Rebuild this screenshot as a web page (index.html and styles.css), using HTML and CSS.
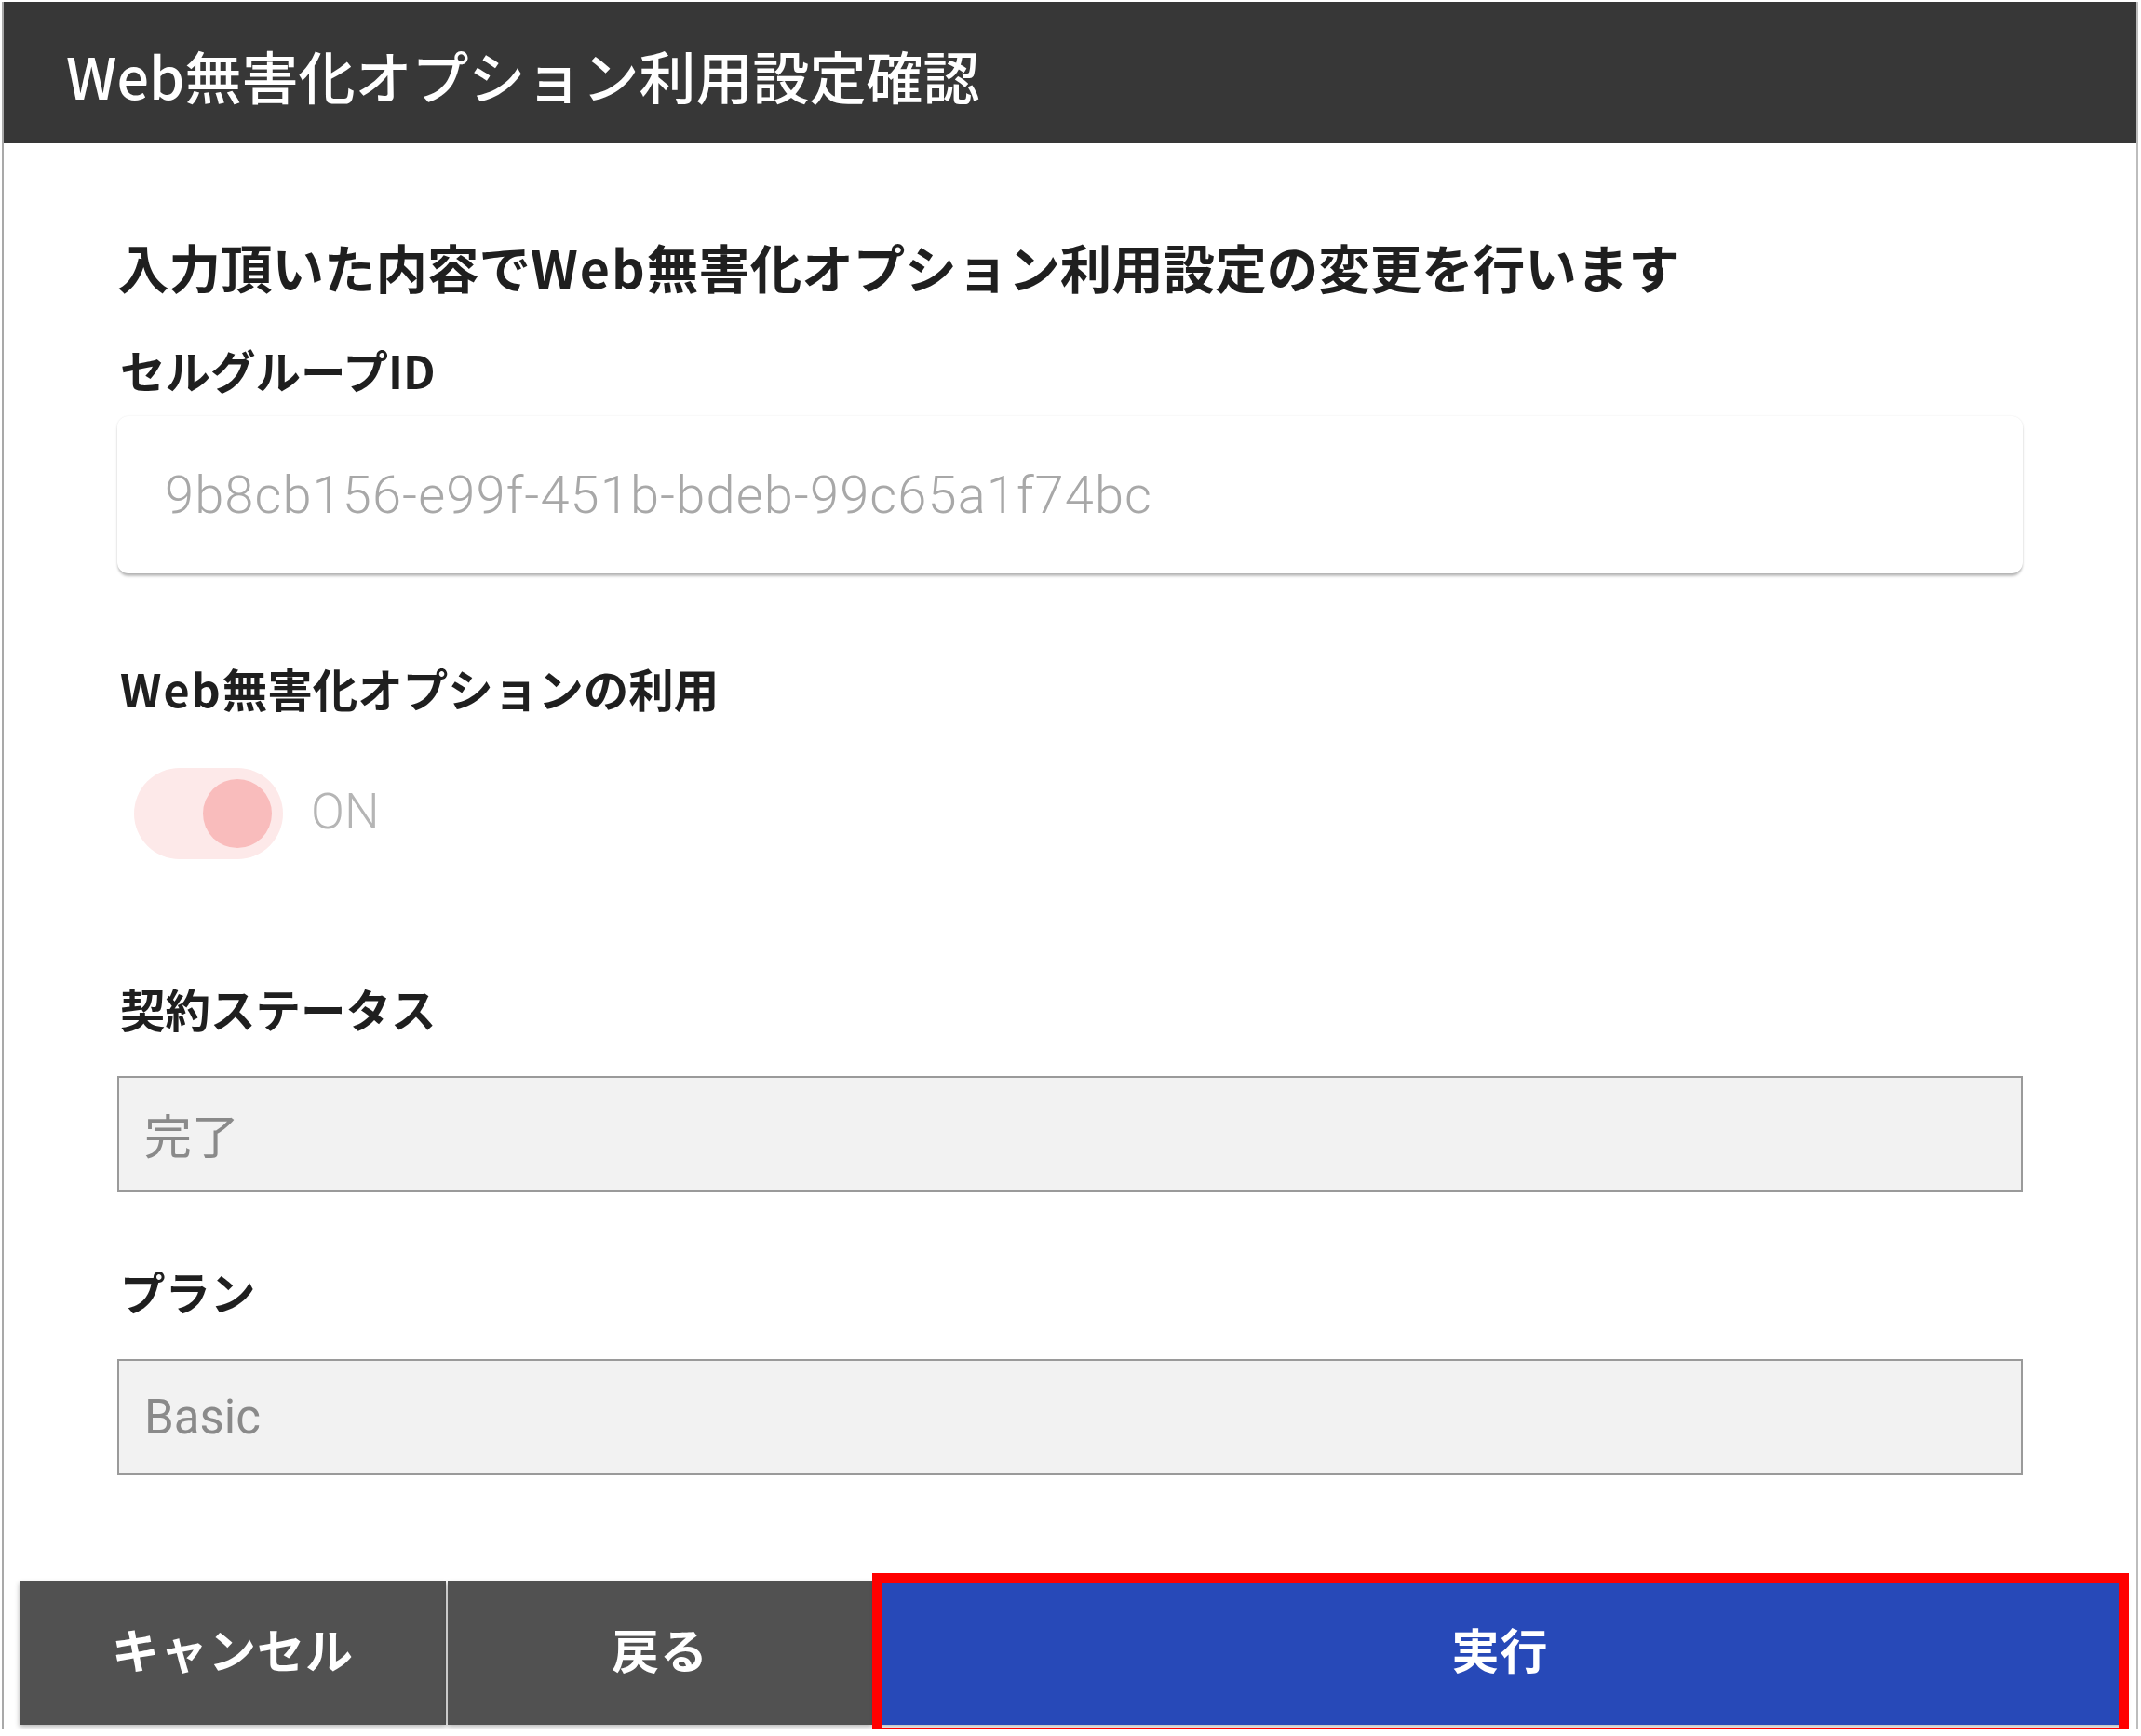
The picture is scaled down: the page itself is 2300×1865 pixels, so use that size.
FILE: index.html
```html
<!DOCTYPE html>
<html lang="ja">
<head>
<meta charset="utf-8">
<title>Web無害化オプション利用設定確認</title>
<link rel="stylesheet" href="styles.css">
</head>
<body>
<div class="frame">
  <header class="dialog-header">
    <h1 class="dialog-title">Web無害化オプション利用設定確認</h1>
  </header>
  <main class="dialog-body">
    <p class="lead">入力頂いた内容で<span class="latin">Web</span>無害化オプション利用設定の変更を行います</p>

    <div class="field field-first">
      <div class="label">セルグループID</div>
      <div class="paper-input">9b8cb156-e99f-451b-bdeb-99c65a1f74bc</div>
    </div>

    <div class="field field-switch">
      <div class="label"><span class="latin">Web</span>無害化オプションの利用</div>
      <div class="switch-row">
        <span class="switch"><span class="switch-thumb"></span></span>
        <span class="switch-text">ON</span>
      </div>
    </div>

    <div class="field field-status">
      <div class="label">契約ステータス</div>
      <div class="box-input">完了</div>
    </div>

    <div class="field field-plan">
      <div class="label">プラン</div>
      <div class="box-input">Basic</div>
    </div>
  </main>
  <footer class="actions">
    <button class="btn btn-dark btn-cancel">キャンセル</button>
    <button class="btn btn-dark btn-back">戻る</button>
    <button class="btn btn-primary">実行</button>
    <span class="highlight"></span>
  </footer>
</div>
</body>
</html>
```

FILE: styles.css
```css
html, body {
  margin: 0;
  padding: 0;
  background: #ffffff;
  overflow: hidden;
}

body {
  font-family: "Noto Sans CJK JP", "Noto Sans", sans-serif;
  color: #1f1f1f;
}

.frame {
  margin: 2px 3px 0 2px;
  border-left: 2px solid #a9a9a9;
  border-right: 2px solid #bdbdbd;
  height: 1856px;
  box-sizing: border-box;
  display: flex;
  flex-direction: column;
}

.dialog-header {
  height: 152px;
  background: #373737;
  display: flex;
  align-items: center;
  padding: 6px 0 0 67px;
  box-sizing: border-box;
}

.dialog-title {
  margin: 0;
  color: #ffffff;
  font-size: 61px;
  font-weight: 500;
  line-height: 1.2;
  letter-spacing: 0;
}

.dialog-body {
  padding: 0 122px 0 122px;
}

.latin {
  letter-spacing: 2px;
}

.lead {
  margin: 99px 0 0 0;
  font-size: 55.5px;
  font-weight: 700;
  line-height: 66px;
}

.label {
  font-size: 48.5px;
  font-weight: 700;
  line-height: 58px;
  padding-left: 3px;
}

.field-first { margin-top: 49px; }
.field-first .paper-input { margin-top: 21px; }

.paper-input {
  height: 169px;
  box-sizing: border-box;
  background: #ffffff;
  border-radius: 12px;
  box-shadow: 0 4px 3px -1px rgba(0, 0, 0, 0.24), 0 1px 3px rgba(0, 0, 0, 0.10), 0 0 2px rgba(0, 0, 0, 0.05);
  display: flex;
  align-items: center;
  padding-left: 51px;
  font-family: Roboto, "Noto Sans", sans-serif;
  font-weight: 300;
  font-size: 56px;
  letter-spacing: 1.1px;
  color: #a8a8a8;
}

.field-switch { margin-top: 94px; }

.switch-row {
  margin-top: 57px;
  display: flex;
  align-items: center;
  padding-left: 18px;
}

.switch {
  width: 160px;
  height: 98px;
  border-radius: 49px;
  background: #fde9e9;
  display: flex;
  align-items: center;
}

.switch-thumb {
  width: 74px;
  height: 74px;
  border-radius: 50%;
  background: #f9bcbc;
  margin-left: 74px;
}

.switch-text {
  margin-left: 30px;
  margin-bottom: 4px;
  font-family: Roboto, "Noto Sans", sans-serif;
  font-weight: 300;
  font-size: 53px;
  color: #b5b5b5;
}

.field-status { margin-top: 131px; }
.field-plan { margin-top: 77px; }

.box-input {
  margin-top: 44px;
  height: 125px;
  box-sizing: border-box;
  background: #f2f2f2;
  border: 2px solid #9a9a9a;
  border-bottom-width: 3px;
  display: flex;
  align-items: center;
  padding-left: 27px;
  font-family: Roboto, "Noto Sans CJK JP", sans-serif;
  font-size: 51px;
  font-weight: 400;
  color: #8a8a8a;
}

.actions {
  position: relative;
  margin: 114px 11px 0 17px;
  display: flex;
  gap: 2px;
  height: 154px;
}

.btn {
  border: none;
  margin: 0;
  padding: 0 0 10px 0;
  font-family: "Noto Sans CJK JP", sans-serif;
  font-weight: 700;
  font-size: 51px;
  letter-spacing: 1px;
  color: #ffffff;
  box-shadow: 0 2px 5px rgba(0, 0, 0, 0.3);
}

.btn-dark { background: #515151; }
.btn-cancel { width: 458px; }
.btn-back { width: 456px; }

.btn-primary {
  flex: 1;
  background: #2749b8;
}

.highlight {
  position: absolute;
  left: 916px;
  right: -3px;
  top: -9px;
  height: 180px;
  border: 11px solid #ff0000;
  border-bottom-width: 14px;
  box-sizing: border-box;
  pointer-events: none;
}
```
